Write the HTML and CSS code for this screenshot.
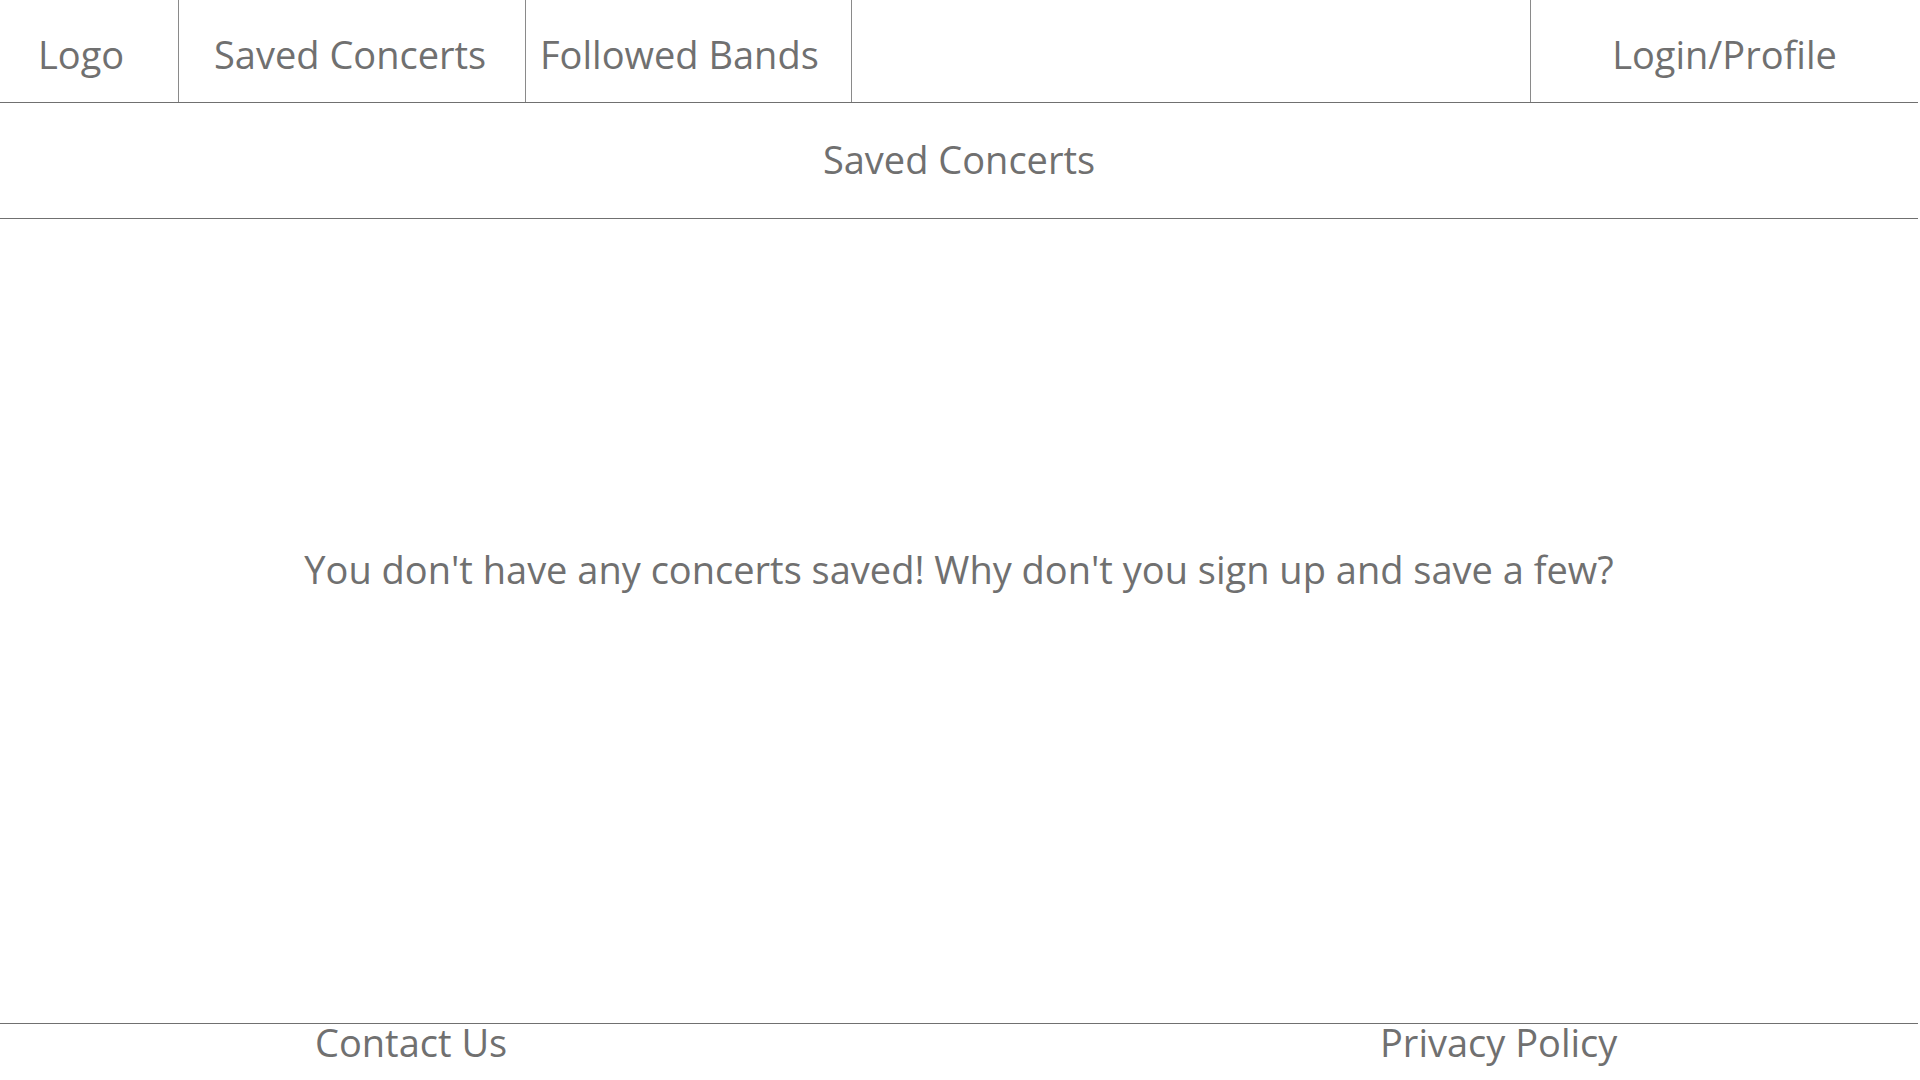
FILE: index.html
```html
<!DOCTYPE html>
<html lang="en">
<head>
  <meta charset="utf-8">
  <title>Saved Concerts</title>
  <meta name="viewport" content="width=device-width, initial-scale=1.0">
  <link rel="stylesheet" href="styles.css">
</head>
<body>
  <div class="page">
    <!-- top navigation -->
    <nav class="topnav">
      <a class="nav-item nav-logo" href="#">Logo</a>
      <a class="nav-item nav-saved" href="#">Saved Concerts</a>
      <a class="nav-item nav-bands" href="#">Followed Bands</a>
      <div class="nav-spacer"></div>
      <a class="nav-item nav-login" href="#">Login/Profile</a>
    </nav>

    <header class="page-title">Saved Concerts</header>

    <main class="content">
      <p class="empty-msg">You don't have any concerts saved! Why don't you sign up and save a few?</p>
    </main>

    <footer class="footer">
      <a href="#">Contact Us</a>
      <a href="#">Privacy Policy</a>
    </footer>
  </div>
</body>
</html>
```

FILE: styles.css
```css
/* 기본 리셋 */
* { margin: 0; padding: 0; box-sizing: border-box; }

body {
  font-family: "Open Sans", "Noto Sans", Arial, sans-serif;
  font-size: 38px;
  color: #707070;
  background: #fff;
}

a {
  color: inherit;
  text-decoration: none;
}

.page {
  width: 1918px;
  height: 100vh;
  display: flex;
  flex-direction: column;
}

/* 상단 메뉴 */
.topnav {
  display: flex;
  height: 103px;
  border-bottom: 1px solid #707070;
}
.nav-item {
  display: flex;
  align-items: center;
  padding-top: 6px;
  border-right: 1px solid #8a8a8a;
}
.nav-logo  { width: 179px; padding-left: 38px; }
.nav-saved { width: 347px; padding-left: 35px; }
.nav-bands { width: 326px; padding-left: 14px; }
.nav-spacer {
  flex: 1;
  border-right: 1px solid #8a8a8a;
}
.nav-login {
  width: 387px;
  justify-content: center;
  border-right: none;
}

/* 페이지 제목 */
.page-title {
  height: 116px;
  display: flex;
  align-items: center;
  justify-content: center;
  padding-bottom: 4px;
  border-bottom: 1px solid #707070;
}

/* 본문 */
.content {
  flex: 1;
  padding-top: 324px;
  text-align: center;
}

/* 하단 */
.footer {
  height: 57px;
  border-top: 1px solid #707070;
  display: grid;
  grid-template-columns: 1065px auto;
  padding-left: 315px;
  line-height: 37px;
}
```
